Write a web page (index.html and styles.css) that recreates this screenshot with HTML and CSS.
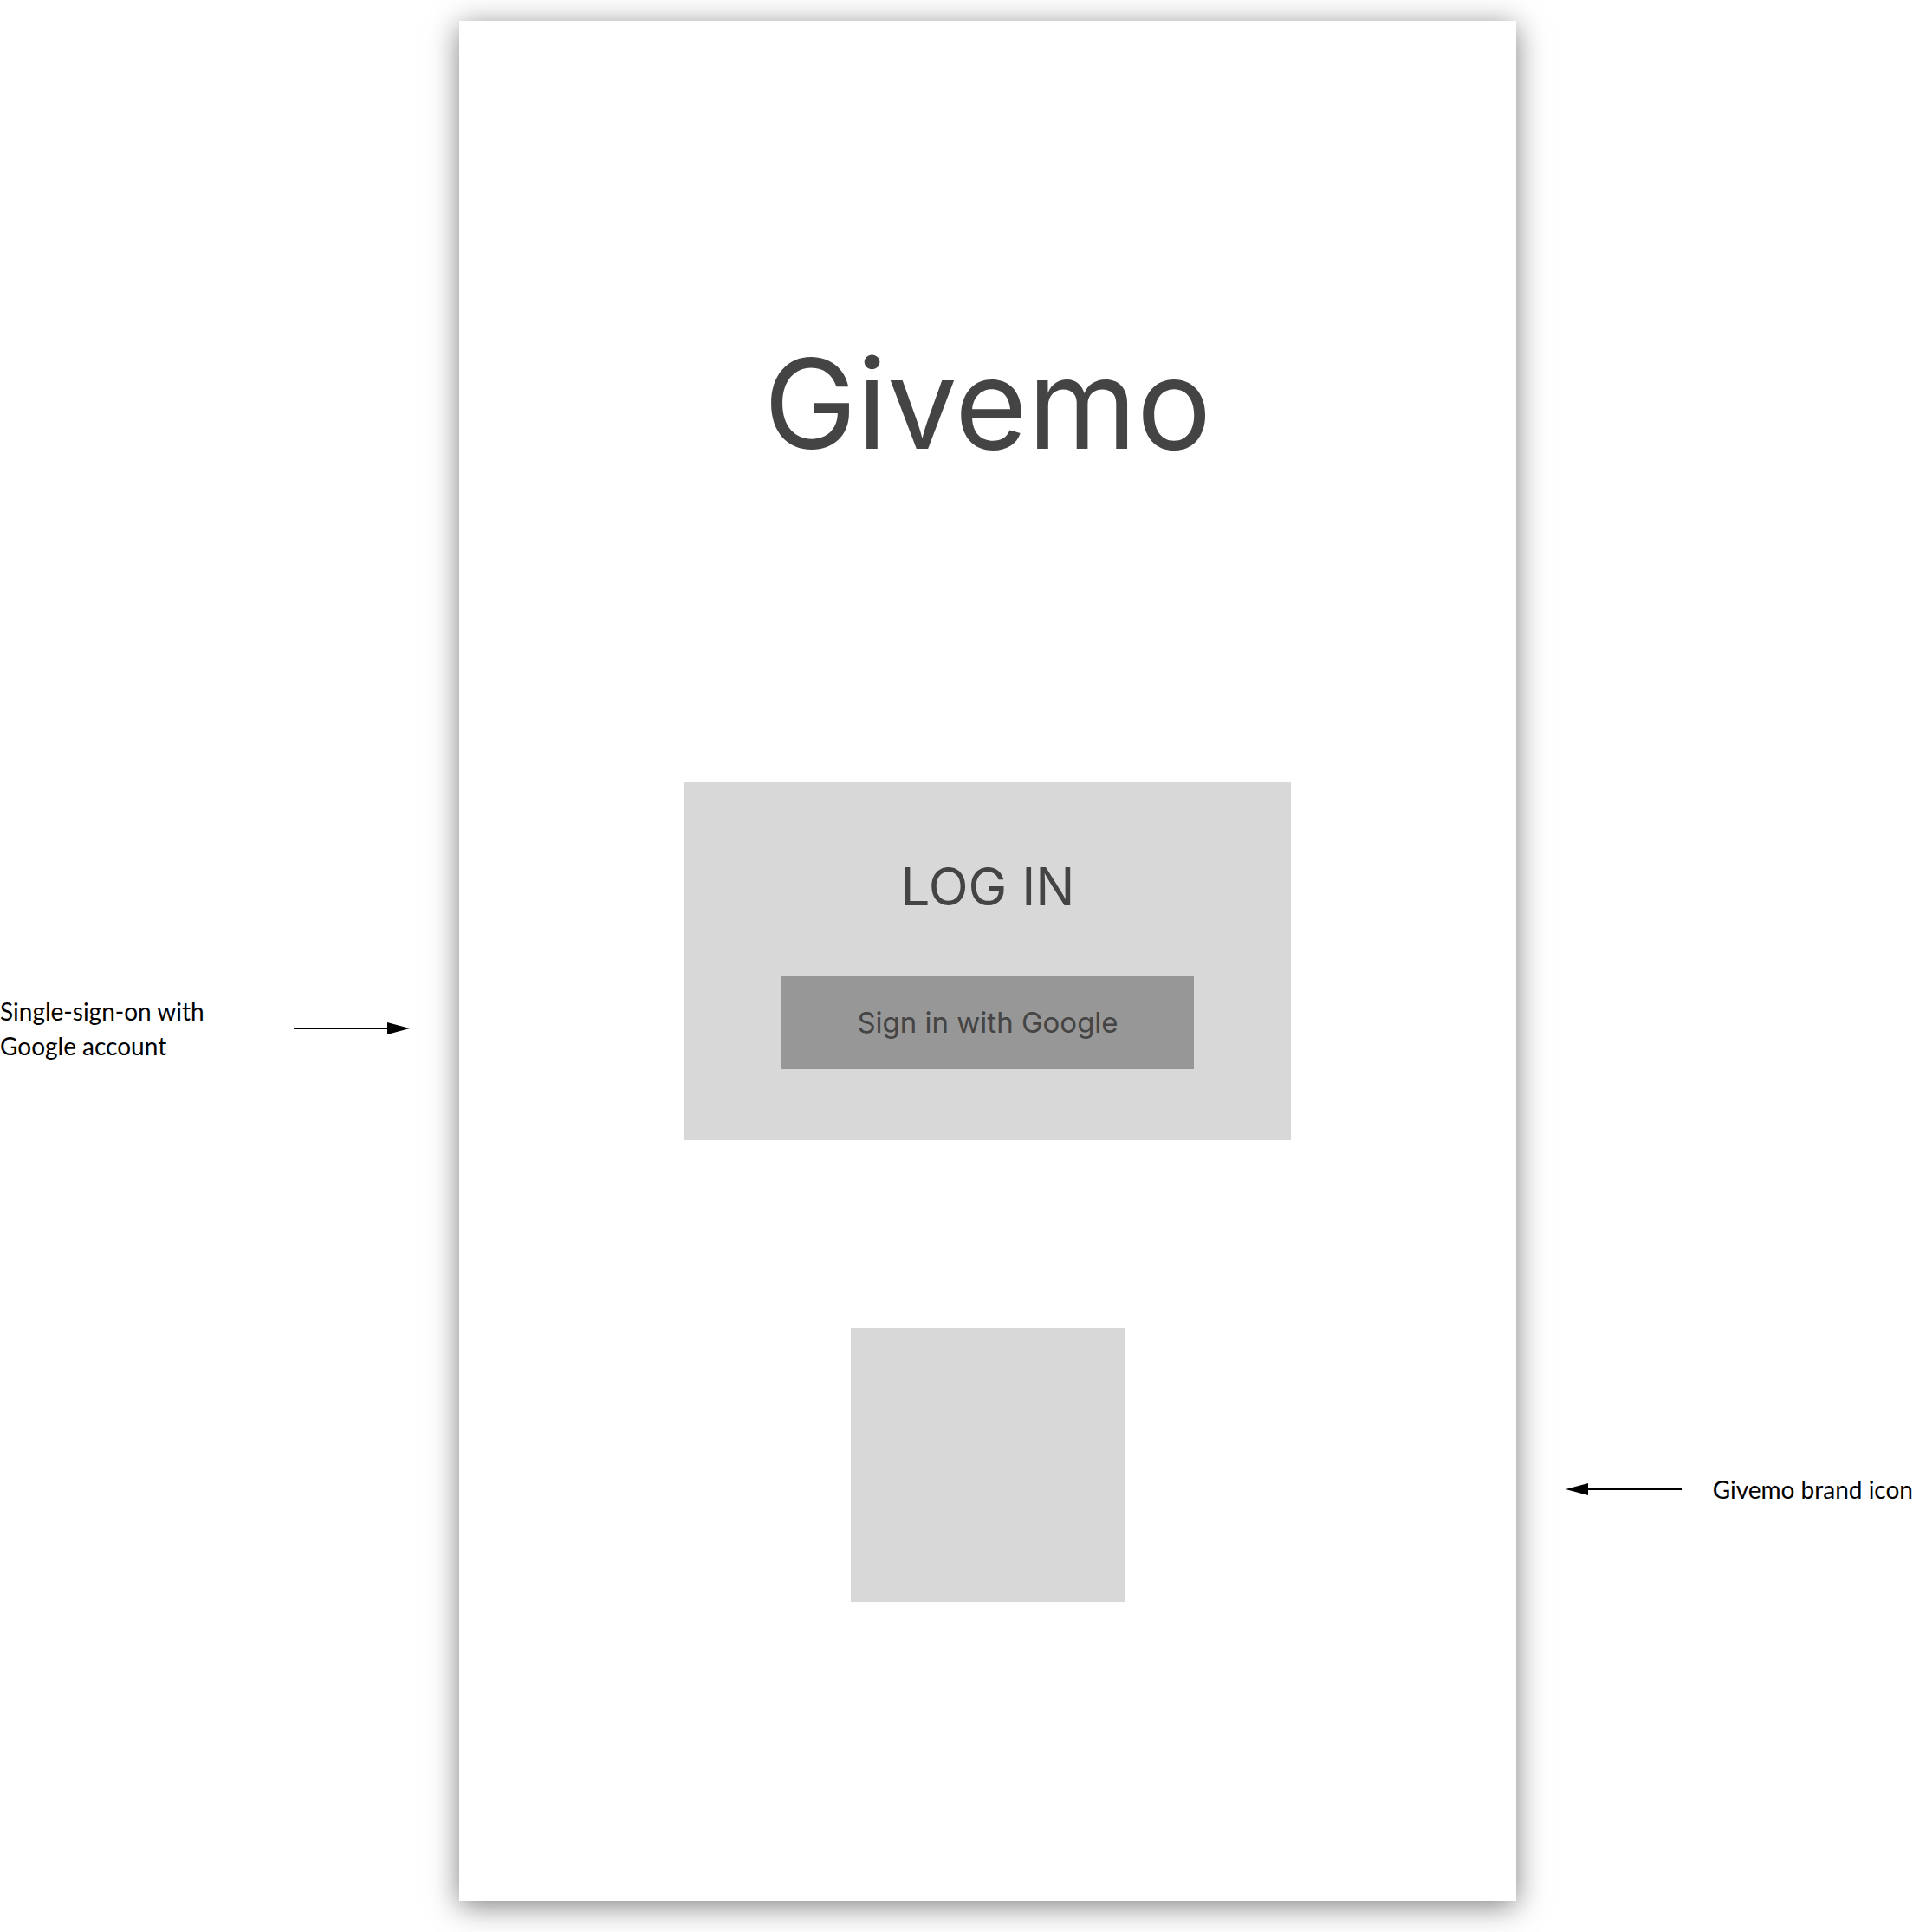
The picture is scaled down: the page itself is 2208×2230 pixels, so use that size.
FILE: index.html
```html
<!DOCTYPE html>
<html lang="en">
<head>
<meta charset="utf-8">
<meta name="viewport" content="width=device-width, initial-scale=1">
<title>Givemo</title>
<link rel="stylesheet" href="styles.css">
</head>
<body>
<div class="board">
  <aside class="note note-left">
    <p class="note-text">Single-sign-on with<br>Google account</p>
    <svg class="arrow" viewBox="0 0 134 14" aria-hidden="true"><path d="M0 6H110V8H0z"/><path d="M108 0L134 7L108 14z"/></svg>
  </aside>
  <main class="screen">
    <h1 class="title">Givemo</h1>
    <section class="login">
      <h2 class="login-title">LOG IN</h2>
      <button class="google-button" type="button">Sign in with Google</button>
    </section>
    <div class="brand-icon"></div>
  </main>
  <aside class="note note-right">
    <svg class="arrow" viewBox="0 0 134 14" aria-hidden="true"><path d="M24 6H134V8H24z"/><path d="M26 0L0 7L26 14z"/></svg>
    <p class="note-text">Givemo brand icon</p>
  </aside>
</div>
</body>
</html>
```
FILE: styles.css
```css
* {
  box-sizing: border-box;
}

body {
  margin: 0;
  background: #fff;
  color: #000;
}

.board {
  display: grid;
  grid-template-columns: 530fr 1220fr 458fr;
  align-items: start;
  padding: 24px 0 36px;
}

.screen {
  display: flex;
  flex-direction: column;
  align-items: center;
  padding: 352px 24px 345px;
  background: #fff;
  box-shadow: 0 6px 32px rgba(0, 0, 0, 0.5);
  color: #444;
  font-family: Inter, "Liberation Sans", sans-serif;
}

.title {
  margin: 0 0 347px;
  font-size: 144px;
  font-weight: 400;
  line-height: 180px;
}

.login {
  display: flex;
  flex-direction: column;
  align-items: center;
  width: 100%;
  max-width: 700px;
  padding: 80px 24px 82px;
  background: #d8d8d8;
}

.login-title {
  margin: 0 0 64px;
  font-size: 60px;
  font-weight: 400;
  line-height: 80px;
}

.google-button {
  width: 100%;
  max-width: 476px;
  padding: 32px 16px;
  border: 0;
  background: #979797;
  color: #444;
  font: inherit;
  font-size: 33px;
  line-height: 43px;
}

.brand-icon {
  width: 316px;
  margin-top: 217px;
  aspect-ratio: 1;
  background: #d8d8d8;
}

.note {
  display: flex;
  align-items: center;
  font-family: Lato, "Liberation Sans", sans-serif;
  font-size: 28px;
  line-height: 40px;
}

.note-left {
  justify-content: space-between;
  padding: 1123px 57px 0 0;
}

.note-right {
  justify-content: space-between;
  padding: 1675px 0 0 57px;
}

.note-text {
  margin: 0;
  white-space: nowrap;
}

.arrow {
  flex: none;
  width: 134px;
  height: 14px;
}
```
